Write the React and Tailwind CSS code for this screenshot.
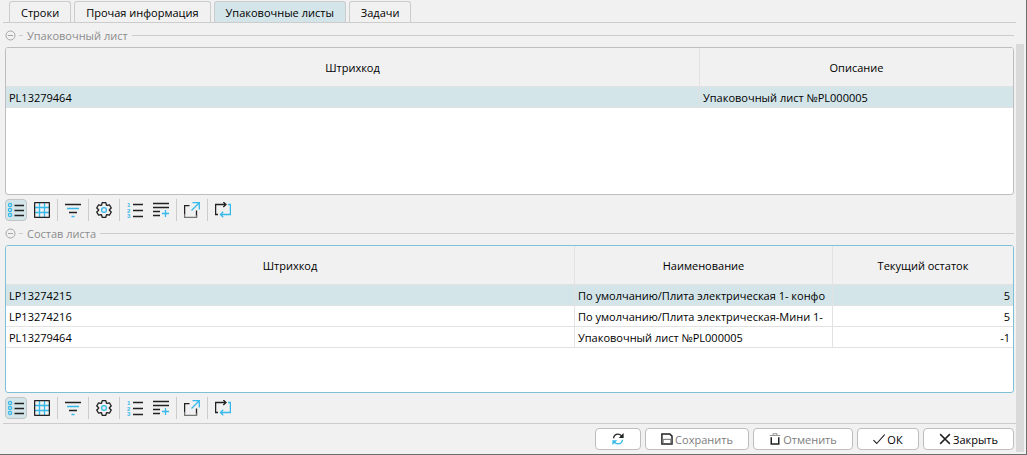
import React, { useState } from "react";

const CYAN = "#35b8ea";
const DARK = "#222222";

function Icon({ children, size = 16 }) {
  return (
    <svg width={size} height={size} viewBox="0 0 16 16" fill="none" stroke={DARK} strokeWidth="1.3" aria-hidden="true" className="block shrink-0">
      {children}
    </svg>
  );
}

const ListIcon = () => (
  <Icon>
    <g stroke={CYAN}>
      <circle cx="2" cy="3" r="1.6" />
      <circle cx="2" cy="8" r="1.6" />
      <circle cx="2" cy="13" r="1.6" />
    </g>
    <path d="M6.5 3.5h9.5M6.5 8.5h9.5M6.5 13.5h9.5" />
  </Icon>
);

const GridIcon = () => (
  <Icon>
    <path stroke={CYAN} d="M5.5 1v14M10.5 1v14M1 5.5h14M1 10.5h14" />
    <rect x="0.6" y="0.6" width="14.8" height="14.8" rx="0.5" />
  </Icon>
);

const FilterIcon = () => (
  <Icon>
    <path d="M0 2.5h16M4 10.5h8" />
    <path stroke={CYAN} d="M2 6.5h12M6.5 14.5h3" />
  </Icon>
);

const GEAR_POINTS = Array.from({ length: 6 }, (_, i) =>
  [[-27, 5.4], [-14, 7.5], [14, 7.5], [27, 5.4]].map(([offset, r]) => {
    const a = ((i * 60 - 90 + offset) * Math.PI) / 180;
    return `${(8 + r * Math.cos(a)).toFixed(2)},${(8 + r * Math.sin(a)).toFixed(2)}`;
  })
).flat().join(" ");

const GearIcon = () => (
  <Icon>
    <polygon points={GEAR_POINTS} strokeLinejoin="round" />
    <circle cx="8" cy="8" r="2.4" stroke={CYAN} />
  </Icon>
);

const NumberedIcon = () => (
  <Icon>
    <g fill={CYAN} stroke="none" fontFamily="Liberation Sans, sans-serif" fontSize="6" fontWeight="bold">
      <text x="0" y="4.5">1</text>
      <text x="0" y="10.5">2</text>
      <text x="0" y="16">3</text>
    </g>
    <path d="M6 2.5h10M6 8.5h10M6 14.5h10" />
  </Icon>
);

const AddRowIcon = () => (
  <Icon>
    <path d="M0 1.5h16M0 5.5h16M0 9.5h7M0 13.5h7" />
    <path stroke={CYAN} d="M9 11.5h7M12.5 8v7" />
  </Icon>
);

const ExternalIcon = () => (
  <Icon>
    <path d="M5.5 3.6h-4.9v9M12.5 8.5v6" />
    <path stroke="#777777" d="M.6 12v3.3h12v-2" />
    <path stroke={CYAN} d="M7.5 8.5l7.5-7.5M8.5 .7h6.8v6.8" />
  </Icon>
);

const SwapIcon = () => (
  <Icon>
    <path d="M3 12.5H.6v-10h10.4M8.3 0l2.7 2.5-2.7 2.5" />
    <path stroke={CYAN} d="M13 2.5h2.4v10H5.5M8.2 9.8l-2.7 2.7 2.7 2.7" />
  </Icon>
);

const RefreshIcon = () => (
  <Icon size={12}>
    <path strokeWidth="1.8" d="M2 7C2.5 3.5 5 1.5 8 1.5c2.5 0 4.2 1.2 5.5 3" />
    <path fill={DARK} stroke="none" d="M15.5 0v6.5H9z" />
    <path stroke={CYAN} strokeWidth="1.8" d="M14 9c-.5 3.5-3 5.5-6 5.5-2.5 0-4.2-1.2-5.5-3" />
    <path fill={CYAN} stroke="none" d="M.5 16V9.5H7z" />
  </Icon>
);

const SaveIcon = () => (
  <Icon size={12}>
    <path strokeWidth="2" d="M1.2 1.2h10.5l3 3v10.5H1.2z" />
    <path stroke="#888888" strokeWidth="1.5" d="M3 14V8.5h10V14" />
  </Icon>
);

const TrashIcon = () => (
  <Icon size={12}>
    <path stroke="#999999" strokeWidth="1.5" d="M1 3.3h14M5.5 3V1h5v2" />
    <path strokeWidth="2" d="M3 5.5v9.3h10V5.5" />
  </Icon>
);

const CheckIcon = () => (
  <Icon size={12}>
    <path strokeWidth="1.5" d="M.5 9.5l4.5 4.5L15.5 2" />
  </Icon>
);

const CrossIcon = () => (
  <Icon size={12}>
    <path strokeWidth="1.9" d="M1.5 1.5l13 13M14.5 1.5l-13 13" />
  </Icon>
);

const TOOL_GROUPS = [
  [["Список", ListIcon], ["Таблица", GridIcon]],
  [["Фильтр", FilterIcon]],
  [["Настройки", GearIcon]],
  [["Нумерация", NumberedIcon], ["Добавить", AddRowIcon]],
  [["Открыть", ExternalIcon]],
  [["Обновление", SwapIcon]],
];

function Toolbar() {
  return (
    <div role="toolbar" className="mt-1 flex items-center gap-1">
      {TOOL_GROUPS.map((group, g) => (
        <React.Fragment key={g}>
          {g > 0 && <span className="h-[22px] w-px bg-[#cccccc]" />}
          {group.map(([label, Glyph], i) => (
            <button
              key={label}
              type="button"
              aria-label={label}
              className={
                g === 0 && i === 0
                  ? "flex size-[22px] items-center justify-center rounded border border-[#c0c4c5] bg-[#d3e5e9]"
                  : "flex size-[22px] items-center justify-center rounded"
              }
            >
              <Glyph />
            </button>
          ))}
        </React.Fragment>
      ))}
    </div>
  );
}

function DataTable({ columns, rows, focused }) {
  return (
    <div className={`min-h-37 overflow-hidden rounded-[3px] border bg-white ${focused ? "border-[#7fc0d6]" : "border-[#bebebe]"}`}>
      <table className="w-full table-fixed border-separate border-spacing-0">
        <thead>
          <tr>
            {columns.map((c) => (
              <th
                key={c.title}
                scope="col"
                className={`h-[39px] border-r border-b border-[#e2e2e2] bg-[#f1f1f1] px-0 pt-[2px] pb-0 text-center font-normal last:border-r-0 ${c.width}`}
              >
                {c.title}
              </th>
            ))}
          </tr>
        </thead>
        <tbody>
          {rows.map((row, r) => (
            <tr key={r} className={r === 0 ? "bg-[#d3e5e9]" : "bg-white"}>
              {row.map((cell, i) => (
                <td
                  key={i}
                  className={`h-[21px] overflow-hidden border-r border-b border-[#e2e2e2] pt-[2px] pb-0 whitespace-nowrap last:border-r-0 ${columns[i].numeric ? "pr-[3px] text-right" : "pl-[3px]"}`}
                >
                  {cell}
                </td>
              ))}
            </tr>
          ))}
        </tbody>
      </table>
    </div>
  );
}

function Section({ title, children }) {
  const [open, setOpen] = useState(true);
  return (
    <section className="px-[2px]">
      <h2 className="flex h-6 items-center text-[#8c8c8c]">
        <button type="button" aria-expanded={open} aria-label={title} onClick={() => setOpen(!open)} className="mr-[3px]">
          <svg width="11" height="11" viewBox="0 0 11 11" fill="none" stroke="#a5a5a5" className="block">
            <circle cx="5.5" cy="5.5" r="4.5" />
            <path d="M3 5.5h5" />
          </svg>
        </button>
        <span className="h-px w-1 bg-[#cccccc]" />
        <span className="px-1 pt-[2px]">{title}</span>
        <span className="h-px flex-1 bg-[#cccccc]" />
      </h2>
      {open && children}
    </section>
  );
}

const TABS = ["Строки", "Прочая информация", "Упаковочные листы", "Задачи"];

const ACTIONS = [
  { label: "", name: "Обновить", Glyph: RefreshIcon, width: "w-[46px]" },
  { label: "Сохранить", Glyph: SaveIcon, width: "w-[104px]", muted: true },
  { label: "Отменить", Glyph: TrashIcon, width: "w-[100px]", muted: true },
  { label: "ОК", Glyph: CheckIcon, width: "w-[62px]" },
  { label: "Закрыть", Glyph: CrossIcon, width: "w-[91px]" },
];

export default function App() {
  const [active, setActive] = useState(2);
  return (
    <div className="flex min-h-screen border-r border-b border-[#6e6e6e] bg-[#f1f1f1] pb-[2px] pl-[3px] font-['Open_Sans',sans-serif] text-[11px] leading-4 text-black">
      <main className="min-w-0 flex-1">
        <div role="tablist" className="flex gap-[3px] border-b border-[#cccccc] pt-px pl-[6px]">
          {TABS.map((tab, i) => (
            <button
              key={tab}
              type="button"
              role="tab"
              aria-selected={i === active}
              onClick={() => setActive(i)}
              className={`h-[21px] rounded-t-[3px] border border-b-0 border-[#cccccc] px-[11px] pt-px ${i === active ? "bg-[#d3e5e9]" : "bg-[#f1f1f1]"}`}
            >
              {tab}
            </button>
          ))}
        </div>

        <Section title="Упаковочный лист">
          <DataTable
            columns={[{ title: "Штрихкод", width: "w-auto" }, { title: "Описание", width: "w-[313px]" }]}
            rows={[["PL13279464", "Упаковочный лист №PL000005"]]}
          />
          <Toolbar />
        </Section>

        <Section title="Состав листа">
          <DataTable
            focused
            columns={[
              { title: "Штрихкод", width: "w-auto" },
              { title: "Наименование", width: "w-[258px]" },
              { title: "Текущий остаток", width: "w-[180px]", numeric: true },
            ]}
            rows={[
              ["LP13274215", "По умолчанию/Плита электрическая 1- конфо", "5"],
              ["LP13274216", "По умолчанию/Плита электрическая-Мини 1-", "5"],
              ["PL13279464", "Упаковочный лист №PL000005", "-1"],
            ]}
          />
          <Toolbar />
        </Section>

        <footer className="mt-1 flex justify-end gap-1 border-t border-[#cccccc] pt-1 pr-[2px]">
          {ACTIONS.map(({ label, name, Glyph, width, muted }) => (
            <button
              key={label || name}
              type="button"
              aria-label={name}
              disabled={muted}
              className={`flex h-[22px] items-center justify-center gap-[2px] rounded border border-[#bebebe] bg-white ${width} ${muted ? "text-[#7d7d7d]" : "text-black"}`}
            >
              <Glyph />
              {label && <span className="pt-px">{label}</span>}
            </button>
          ))}
        </footer>
      </main>
      <div className="mt-11 mr-[2px] w-2 bg-[#dadada]" />
    </div>
  );
}
